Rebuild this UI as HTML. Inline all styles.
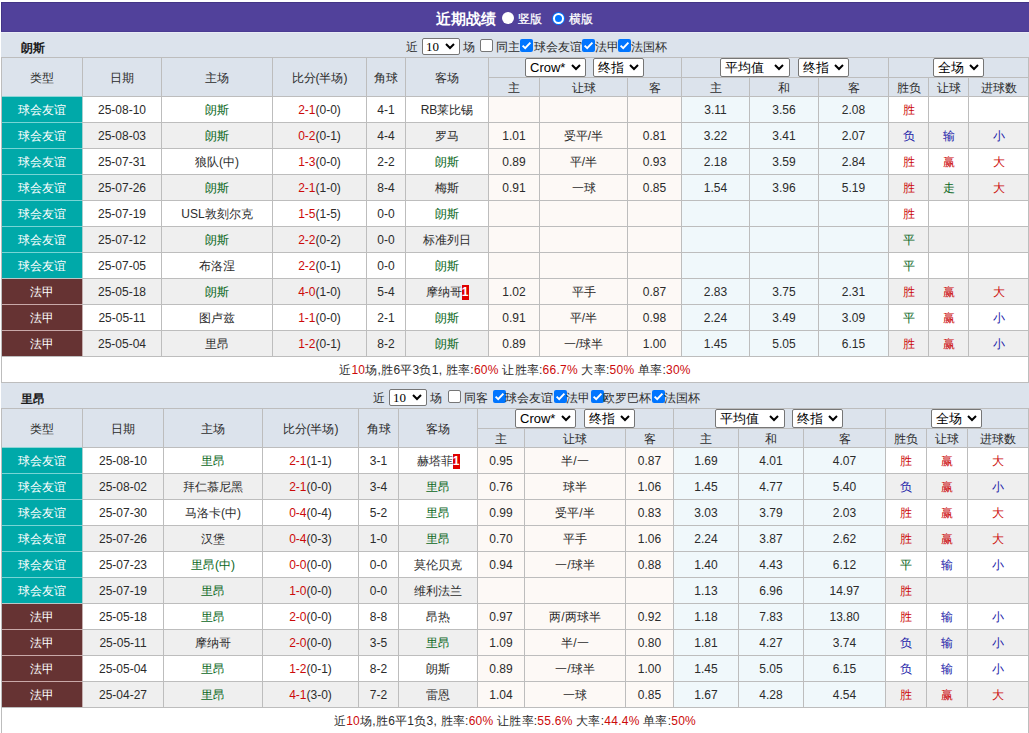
<!DOCTYPE html><html><head><meta charset="utf-8"><style>
*{margin:0;padding:0;box-sizing:content-box}
html,body{width:1029px;height:733px;overflow:hidden;background:#fff}
body{position:relative;font-family:"Liberation Sans",sans-serif;font-size:12px;color:#333}
.a{position:absolute}
.t{position:absolute;text-align:center;white-space:nowrap;overflow:visible}
.sel{background:#fff;border:1px solid #767676;border-radius:2px}
.cb{width:11px;height:11px;border:1px solid #767676;border-radius:2px;background:#fff}
.cbc{width:13px;height:13px;border-radius:2px;background:#0075FF}
.badge{display:inline-block;background:#e00000;color:#fff;font-weight:bold;line-height:15px;height:15px;width:7px;text-align:center;vertical-align:0px;font-size:12px}
</style></head><body><div class="a" style="left:1px;top:2px;width:1028px;height:30px;background:#51419B;"></div><div class="a" style="left:1px;top:2px;width:1028px;height:1px;background:#433586;"></div><div class="a" style="left:1px;top:2px;width:1px;height:30px;background:#433586;"></div><div class="a" style="left:1px;top:31px;width:1028px;height:1px;background:#4a3c92;"></div><div class="a" style="left:436px;top:8.5px;line-height:19px;color:#fff;font-size:15px;white-space:nowrap;font-weight:bold;">近期战绩</div><div class="a" style="left:502px;top:12px;width:12px;height:12px;border-radius:50%;background:#fff;"></div><div class="a" style="left:518px;top:11px;line-height:16px;color:#fff;font-size:12px;white-space:nowrap;-webkit-text-stroke:0.25px #fff;">竖版</div><div class="a" style="left:553px;top:13px;width:7px;height:7px;border-radius:50%;background:#0075FF;border:2px solid #fff;box-shadow:0 0 0 1px #0075FF"></div><div class="a" style="left:569px;top:11px;line-height:16px;color:#fff;font-size:12px;white-space:nowrap;-webkit-text-stroke:0.25px #fff;">横版</div><div class="a" style="left:1px;top:32px;width:1028px;height:25px;background:#DCE3EC;"></div><div class="a" style="left:1px;top:32px;width:1028px;height:1px;background:#e9ebf5;"></div><div class="a" style="left:21px;top:40px;line-height:16px;color:#1a1a1a;font-size:12px;white-space:nowrap;font-weight:bold;">朗斯</div><div class="a" style="left:406px;top:39px;line-height:16px;color:#2b2b2b;font-size:12px;white-space:nowrap;">近</div><div class="a sel" style="left:422px;top:38px;width:36px;height:15px;"></div><div class="a" style="left:426px;top:38px;height:17px;line-height:17px;font-size:13px;color:#000;font-family:'Liberation Serif',serif;white-space:nowrap">10</div><svg class="a" style="left:445px;top:43px" width="10" height="7" viewBox="0 0 10 7"><path d="M1 1 L5.0 5 L9 1" fill="none" stroke="#000" stroke-width="2"/></svg><div class="a" style="left:463px;top:39px;line-height:16px;color:#2b2b2b;font-size:12px;white-space:nowrap;">场</div><div class="a cb" style="left:480px;top:39px;"></div><div class="a" style="left:496px;top:39px;line-height:16px;color:#2b2b2b;font-size:12px;white-space:nowrap;">同主</div><div class="a cbc" style="left:520px;top:39px;"></div><svg class="a" style="left:520px;top:39px" width="13" height="13" viewBox="0 0 13 13"><path d="M2.6 6.6 L5.2 9.2 L10.4 3.6" fill="none" stroke="#fff" stroke-width="1.9"/></svg><div class="a" style="left:534px;top:39px;line-height:16px;color:#2b2b2b;font-size:12px;white-space:nowrap;">球会友谊</div><div class="a cbc" style="left:582px;top:39px;"></div><svg class="a" style="left:582px;top:39px" width="13" height="13" viewBox="0 0 13 13"><path d="M2.6 6.6 L5.2 9.2 L10.4 3.6" fill="none" stroke="#fff" stroke-width="1.9"/></svg><div class="a" style="left:595px;top:39px;line-height:16px;color:#2b2b2b;font-size:12px;white-space:nowrap;">法甲</div><div class="a cbc" style="left:618px;top:39px;"></div><svg class="a" style="left:618px;top:39px" width="13" height="13" viewBox="0 0 13 13"><path d="M2.6 6.6 L5.2 9.2 L10.4 3.6" fill="none" stroke="#fff" stroke-width="1.9"/></svg><div class="a" style="left:631px;top:39px;line-height:16px;color:#2b2b2b;font-size:12px;white-space:nowrap;">法国杯</div><div class="a" style="left:1px;top:57px;width:1028px;height:300px;background:#BDBDBD;"></div><div class="a" style="left:2px;top:58px;width:80px;height:38px;background:#DCE3EC;"></div><div class="t" style="left:2px;top:59px;width:80px;height:38px;line-height:38px;color:#2b2b2b;font-size:12px;">类型</div><div class="a" style="left:83px;top:58px;width:78px;height:38px;background:#DCE3EC;"></div><div class="t" style="left:83px;top:59px;width:78px;height:38px;line-height:38px;color:#2b2b2b;font-size:12px;">日期</div><div class="a" style="left:162px;top:58px;width:110px;height:38px;background:#DCE3EC;"></div><div class="t" style="left:162px;top:59px;width:110px;height:38px;line-height:38px;color:#2b2b2b;font-size:12px;">主场</div><div class="a" style="left:273px;top:58px;width:93px;height:38px;background:#DCE3EC;"></div><div class="t" style="left:273px;top:59px;width:93px;height:38px;line-height:38px;color:#2b2b2b;font-size:12px;">比分(半场)</div><div class="a" style="left:367px;top:58px;width:38px;height:38px;background:#DCE3EC;"></div><div class="t" style="left:367px;top:59px;width:38px;height:38px;line-height:38px;color:#2b2b2b;font-size:12px;">角球</div><div class="a" style="left:406px;top:58px;width:82px;height:38px;background:#DCE3EC;"></div><div class="t" style="left:406px;top:59px;width:82px;height:38px;line-height:38px;color:#2b2b2b;font-size:12px;">客场</div><div class="a" style="left:489px;top:58px;width:192px;height:19px;background:#DCE3EC;"></div><div class="a" style="left:489px;top:78px;width:50px;height:18px;background:#DCE3EC;"></div><div class="t" style="left:489px;top:79px;width:50px;height:18px;line-height:18px;color:#2b2b2b;font-size:12px;">主</div><div class="a" style="left:540px;top:78px;width:87px;height:18px;background:#DCE3EC;"></div><div class="t" style="left:540px;top:79px;width:87px;height:18px;line-height:18px;color:#2b2b2b;font-size:12px;">让球</div><div class="a" style="left:628px;top:78px;width:53px;height:18px;background:#DCE3EC;"></div><div class="t" style="left:628px;top:79px;width:53px;height:18px;line-height:18px;color:#2b2b2b;font-size:12px;">客</div><div class="a" style="left:682px;top:58px;width:206px;height:19px;background:#DCE3EC;"></div><div class="a" style="left:682px;top:78px;width:67px;height:18px;background:#DCE3EC;"></div><div class="t" style="left:682px;top:79px;width:67px;height:18px;line-height:18px;color:#2b2b2b;font-size:12px;">主</div><div class="a" style="left:750px;top:78px;width:68px;height:18px;background:#DCE3EC;"></div><div class="t" style="left:750px;top:79px;width:68px;height:18px;line-height:18px;color:#2b2b2b;font-size:12px;">和</div><div class="a" style="left:819px;top:78px;width:69px;height:18px;background:#DCE3EC;"></div><div class="t" style="left:819px;top:79px;width:69px;height:18px;line-height:18px;color:#2b2b2b;font-size:12px;">客</div><div class="a" style="left:889px;top:58px;width:139px;height:19px;background:#DCE3EC;"></div><div class="a" style="left:889px;top:78px;width:39px;height:18px;background:#DCE3EC;"></div><div class="t" style="left:889px;top:79px;width:39px;height:18px;line-height:18px;color:#2b2b2b;font-size:12px;">胜负</div><div class="a" style="left:929px;top:78px;width:39px;height:18px;background:#DCE3EC;"></div><div class="t" style="left:929px;top:79px;width:39px;height:18px;line-height:18px;color:#2b2b2b;font-size:12px;">让球</div><div class="a" style="left:969px;top:78px;width:59px;height:18px;background:#DCE3EC;"></div><div class="t" style="left:969px;top:79px;width:59px;height:18px;line-height:18px;color:#2b2b2b;font-size:12px;">进球数</div><div class="a sel" style="left:525px;top:58px;width:59px;height:17px;"></div><div class="a" style="left:530px;top:58px;height:19px;line-height:19px;font-size:13px;color:#000;white-space:nowrap">Crow*</div><svg class="a" style="left:571px;top:64px" width="10" height="7" viewBox="0 0 10 7"><path d="M1 1 L5.0 5 L9 1" fill="none" stroke="#000" stroke-width="2"/></svg><div class="a sel" style="left:593px;top:58px;width:49px;height:17px;"></div><div class="a" style="left:598px;top:58px;height:19px;line-height:19px;font-size:13px;color:#000;white-space:nowrap">终指</div><svg class="a" style="left:629px;top:64px" width="10" height="7" viewBox="0 0 10 7"><path d="M1 1 L5.0 5 L9 1" fill="none" stroke="#000" stroke-width="2"/></svg><div class="a sel" style="left:720px;top:58px;width:68px;height:17px;"></div><div class="a" style="left:725px;top:58px;height:19px;line-height:19px;font-size:13px;color:#000;white-space:nowrap">平均值</div><svg class="a" style="left:774px;top:64px" width="10" height="7" viewBox="0 0 10 7"><path d="M1 1 L5.0 5 L9 1" fill="none" stroke="#000" stroke-width="2"/></svg><div class="a sel" style="left:798px;top:58px;width:49px;height:17px;"></div><div class="a" style="left:803px;top:58px;height:19px;line-height:19px;font-size:13px;color:#000;white-space:nowrap">终指</div><svg class="a" style="left:834px;top:64px" width="10" height="7" viewBox="0 0 10 7"><path d="M1 1 L5.0 5 L9 1" fill="none" stroke="#000" stroke-width="2"/></svg><div class="a sel" style="left:933px;top:58px;width:49px;height:17px;"></div><div class="a" style="left:938px;top:58px;height:19px;line-height:19px;font-size:13px;color:#000;white-space:nowrap">全场</div><svg class="a" style="left:969px;top:64px" width="10" height="7" viewBox="0 0 10 7"><path d="M1 1 L5.0 5 L9 1" fill="none" stroke="#000" stroke-width="2"/></svg><div class="a" style="left:2px;top:97px;width:80px;height:25px;background:#00A9A9;"></div><div class="t" style="left:2px;top:98px;width:80px;height:25px;line-height:25px;color:#fff;font-size:12px;">球会友谊</div><div class="a" style="left:83px;top:97px;width:78px;height:25px;background:#FFFFFF;"></div><div class="t" style="left:83px;top:98px;width:78px;height:25px;line-height:25px;color:#2b2b2b;font-size:12px;">25-08-10</div><div class="a" style="left:162px;top:97px;width:110px;height:25px;background:#FFFFFF;"></div><div class="t" style="left:162px;top:98px;width:110px;height:25px;line-height:25px;color:#2b2b2b;font-size:12px;"><span style="color:#08661a">朗斯</span></div><div class="a" style="left:273px;top:97px;width:93px;height:25px;background:#FFFFFF;"></div><div class="t" style="left:273px;top:98px;width:93px;height:25px;line-height:25px;color:#2b2b2b;font-size:12px;"><span style="color:#CC0A0A">2-1</span>(0-0)</div><div class="a" style="left:367px;top:97px;width:38px;height:25px;background:#FFFFFF;"></div><div class="t" style="left:367px;top:98px;width:38px;height:25px;line-height:25px;color:#2b2b2b;font-size:12px;">4-1</div><div class="a" style="left:406px;top:97px;width:82px;height:25px;background:#FFFFFF;"></div><div class="t" style="left:406px;top:98px;width:82px;height:25px;line-height:25px;color:#2b2b2b;font-size:12px;">RB莱比锡</div><div class="a" style="left:489px;top:97px;width:50px;height:25px;background:#FDF9F6;"></div><div class="a" style="left:540px;top:97px;width:87px;height:25px;background:#FDF9F6;"></div><div class="a" style="left:628px;top:97px;width:53px;height:25px;background:#FDF9F6;"></div><div class="a" style="left:682px;top:97px;width:67px;height:25px;background:#F0F8FB;"></div><div class="t" style="left:682px;top:98px;width:67px;height:25px;line-height:25px;color:#2b2b2b;font-size:12px;">3.11</div><div class="a" style="left:750px;top:97px;width:68px;height:25px;background:#F0F8FB;"></div><div class="t" style="left:750px;top:98px;width:68px;height:25px;line-height:25px;color:#2b2b2b;font-size:12px;">3.56</div><div class="a" style="left:819px;top:97px;width:69px;height:25px;background:#F0F8FB;"></div><div class="t" style="left:819px;top:98px;width:69px;height:25px;line-height:25px;color:#2b2b2b;font-size:12px;">2.08</div><div class="a" style="left:889px;top:97px;width:39px;height:25px;background:#FFFFFF;"></div><div class="t" style="left:889px;top:98px;width:39px;height:25px;line-height:25px;color:#2b2b2b;font-size:12px;"><span style="color:#CC0A0A">胜</span></div><div class="a" style="left:929px;top:97px;width:39px;height:25px;background:#FFFFFF;"></div><div class="a" style="left:969px;top:97px;width:59px;height:25px;background:#FFFFFF;"></div><div class="a" style="left:82px;top:97px;width:1px;height:25px;background:#A9CFCF;"></div><div class="a" style="left:2px;top:123px;width:80px;height:25px;background:#00A9A9;"></div><div class="t" style="left:2px;top:124px;width:80px;height:25px;line-height:25px;color:#fff;font-size:12px;">球会友谊</div><div class="a" style="left:83px;top:123px;width:78px;height:25px;background:#EFEFEF;"></div><div class="t" style="left:83px;top:124px;width:78px;height:25px;line-height:25px;color:#2b2b2b;font-size:12px;">25-08-03</div><div class="a" style="left:162px;top:123px;width:110px;height:25px;background:#EFEFEF;"></div><div class="t" style="left:162px;top:124px;width:110px;height:25px;line-height:25px;color:#2b2b2b;font-size:12px;"><span style="color:#08661a">朗斯</span></div><div class="a" style="left:273px;top:123px;width:93px;height:25px;background:#EFEFEF;"></div><div class="t" style="left:273px;top:124px;width:93px;height:25px;line-height:25px;color:#2b2b2b;font-size:12px;"><span style="color:#CC0A0A">0-2</span>(0-1)</div><div class="a" style="left:367px;top:123px;width:38px;height:25px;background:#EFEFEF;"></div><div class="t" style="left:367px;top:124px;width:38px;height:25px;line-height:25px;color:#2b2b2b;font-size:12px;">4-4</div><div class="a" style="left:406px;top:123px;width:82px;height:25px;background:#EFEFEF;"></div><div class="t" style="left:406px;top:124px;width:82px;height:25px;line-height:25px;color:#2b2b2b;font-size:12px;">罗马</div><div class="a" style="left:489px;top:123px;width:50px;height:25px;background:#FDF9F6;"></div><div class="t" style="left:489px;top:124px;width:50px;height:25px;line-height:25px;color:#2b2b2b;font-size:12px;">1.01</div><div class="a" style="left:540px;top:123px;width:87px;height:25px;background:#FDF9F6;"></div><div class="t" style="left:540px;top:124px;width:87px;height:25px;line-height:25px;color:#2b2b2b;font-size:12px;">受平/半</div><div class="a" style="left:628px;top:123px;width:53px;height:25px;background:#FDF9F6;"></div><div class="t" style="left:628px;top:124px;width:53px;height:25px;line-height:25px;color:#2b2b2b;font-size:12px;">0.81</div><div class="a" style="left:682px;top:123px;width:67px;height:25px;background:#F0F8FB;"></div><div class="t" style="left:682px;top:124px;width:67px;height:25px;line-height:25px;color:#2b2b2b;font-size:12px;">3.22</div><div class="a" style="left:750px;top:123px;width:68px;height:25px;background:#F0F8FB;"></div><div class="t" style="left:750px;top:124px;width:68px;height:25px;line-height:25px;color:#2b2b2b;font-size:12px;">3.41</div><div class="a" style="left:819px;top:123px;width:69px;height:25px;background:#F0F8FB;"></div><div class="t" style="left:819px;top:124px;width:69px;height:25px;line-height:25px;color:#2b2b2b;font-size:12px;">2.07</div><div class="a" style="left:889px;top:123px;width:39px;height:25px;background:#EFEFEF;"></div><div class="t" style="left:889px;top:124px;width:39px;height:25px;line-height:25px;color:#2b2b2b;font-size:12px;"><span style="color:#1a1aa8">负</span></div><div class="a" style="left:929px;top:123px;width:39px;height:25px;background:#EFEFEF;"></div><div class="t" style="left:929px;top:124px;width:39px;height:25px;line-height:25px;color:#2b2b2b;font-size:12px;"><span style="color:#1a1aa8">输</span></div><div class="a" style="left:969px;top:123px;width:59px;height:25px;background:#EFEFEF;"></div><div class="t" style="left:969px;top:124px;width:59px;height:25px;line-height:25px;color:#2b2b2b;font-size:12px;"><span style="color:#1a1aa8">小</span></div><div class="a" style="left:82px;top:123px;width:1px;height:25px;background:#A9CFCF;"></div><div class="a" style="left:2px;top:122px;width:80px;height:1px;background:#78D5D5;"></div><div class="a" style="left:2px;top:149px;width:80px;height:25px;background:#00A9A9;"></div><div class="t" style="left:2px;top:150px;width:80px;height:25px;line-height:25px;color:#fff;font-size:12px;">球会友谊</div><div class="a" style="left:83px;top:149px;width:78px;height:25px;background:#FFFFFF;"></div><div class="t" style="left:83px;top:150px;width:78px;height:25px;line-height:25px;color:#2b2b2b;font-size:12px;">25-07-31</div><div class="a" style="left:162px;top:149px;width:110px;height:25px;background:#FFFFFF;"></div><div class="t" style="left:162px;top:150px;width:110px;height:25px;line-height:25px;color:#2b2b2b;font-size:12px;">狼队(中)</div><div class="a" style="left:273px;top:149px;width:93px;height:25px;background:#FFFFFF;"></div><div class="t" style="left:273px;top:150px;width:93px;height:25px;line-height:25px;color:#2b2b2b;font-size:12px;"><span style="color:#CC0A0A">1-3</span>(0-0)</div><div class="a" style="left:367px;top:149px;width:38px;height:25px;background:#FFFFFF;"></div><div class="t" style="left:367px;top:150px;width:38px;height:25px;line-height:25px;color:#2b2b2b;font-size:12px;">2-2</div><div class="a" style="left:406px;top:149px;width:82px;height:25px;background:#FFFFFF;"></div><div class="t" style="left:406px;top:150px;width:82px;height:25px;line-height:25px;color:#2b2b2b;font-size:12px;"><span style="color:#08661a">朗斯</span></div><div class="a" style="left:489px;top:149px;width:50px;height:25px;background:#FDF9F6;"></div><div class="t" style="left:489px;top:150px;width:50px;height:25px;line-height:25px;color:#2b2b2b;font-size:12px;">0.89</div><div class="a" style="left:540px;top:149px;width:87px;height:25px;background:#FDF9F6;"></div><div class="t" style="left:540px;top:150px;width:87px;height:25px;line-height:25px;color:#2b2b2b;font-size:12px;">平/半</div><div class="a" style="left:628px;top:149px;width:53px;height:25px;background:#FDF9F6;"></div><div class="t" style="left:628px;top:150px;width:53px;height:25px;line-height:25px;color:#2b2b2b;font-size:12px;">0.93</div><div class="a" style="left:682px;top:149px;width:67px;height:25px;background:#F0F8FB;"></div><div class="t" style="left:682px;top:150px;width:67px;height:25px;line-height:25px;color:#2b2b2b;font-size:12px;">2.18</div><div class="a" style="left:750px;top:149px;width:68px;height:25px;background:#F0F8FB;"></div><div class="t" style="left:750px;top:150px;width:68px;height:25px;line-height:25px;color:#2b2b2b;font-size:12px;">3.59</div><div class="a" style="left:819px;top:149px;width:69px;height:25px;background:#F0F8FB;"></div><div class="t" style="left:819px;top:150px;width:69px;height:25px;line-height:25px;color:#2b2b2b;font-size:12px;">2.84</div><div class="a" style="left:889px;top:149px;width:39px;height:25px;background:#FFFFFF;"></div><div class="t" style="left:889px;top:150px;width:39px;height:25px;line-height:25px;color:#2b2b2b;font-size:12px;"><span style="color:#CC0A0A">胜</span></div><div class="a" style="left:929px;top:149px;width:39px;height:25px;background:#FFFFFF;"></div><div class="t" style="left:929px;top:150px;width:39px;height:25px;line-height:25px;color:#2b2b2b;font-size:12px;"><span style="color:#CC0A0A">赢</span></div><div class="a" style="left:969px;top:149px;width:59px;height:25px;background:#FFFFFF;"></div><div class="t" style="left:969px;top:150px;width:59px;height:25px;line-height:25px;color:#2b2b2b;font-size:12px;"><span style="color:#CC0A0A">大</span></div><div class="a" style="left:82px;top:149px;width:1px;height:25px;background:#A9CFCF;"></div><div class="a" style="left:2px;top:148px;width:80px;height:1px;background:#78D5D5;"></div><div class="a" style="left:2px;top:175px;width:80px;height:25px;background:#00A9A9;"></div><div class="t" style="left:2px;top:176px;width:80px;height:25px;line-height:25px;color:#fff;font-size:12px;">球会友谊</div><div class="a" style="left:83px;top:175px;width:78px;height:25px;background:#EFEFEF;"></div><div class="t" style="left:83px;top:176px;width:78px;height:25px;line-height:25px;color:#2b2b2b;font-size:12px;">25-07-26</div><div class="a" style="left:162px;top:175px;width:110px;height:25px;background:#EFEFEF;"></div><div class="t" style="left:162px;top:176px;width:110px;height:25px;line-height:25px;color:#2b2b2b;font-size:12px;"><span style="color:#08661a">朗斯</span></div><div class="a" style="left:273px;top:175px;width:93px;height:25px;background:#EFEFEF;"></div><div class="t" style="left:273px;top:176px;width:93px;height:25px;line-height:25px;color:#2b2b2b;font-size:12px;"><span style="color:#CC0A0A">2-1</span>(1-0)</div><div class="a" style="left:367px;top:175px;width:38px;height:25px;background:#EFEFEF;"></div><div class="t" style="left:367px;top:176px;width:38px;height:25px;line-height:25px;color:#2b2b2b;font-size:12px;">8-4</div><div class="a" style="left:406px;top:175px;width:82px;height:25px;background:#EFEFEF;"></div><div class="t" style="left:406px;top:176px;width:82px;height:25px;line-height:25px;color:#2b2b2b;font-size:12px;">梅斯</div><div class="a" style="left:489px;top:175px;width:50px;height:25px;background:#FDF9F6;"></div><div class="t" style="left:489px;top:176px;width:50px;height:25px;line-height:25px;color:#2b2b2b;font-size:12px;">0.91</div><div class="a" style="left:540px;top:175px;width:87px;height:25px;background:#FDF9F6;"></div><div class="t" style="left:540px;top:176px;width:87px;height:25px;line-height:25px;color:#2b2b2b;font-size:12px;">一球</div><div class="a" style="left:628px;top:175px;width:53px;height:25px;background:#FDF9F6;"></div><div class="t" style="left:628px;top:176px;width:53px;height:25px;line-height:25px;color:#2b2b2b;font-size:12px;">0.85</div><div class="a" style="left:682px;top:175px;width:67px;height:25px;background:#F0F8FB;"></div><div class="t" style="left:682px;top:176px;width:67px;height:25px;line-height:25px;color:#2b2b2b;font-size:12px;">1.54</div><div class="a" style="left:750px;top:175px;width:68px;height:25px;background:#F0F8FB;"></div><div class="t" style="left:750px;top:176px;width:68px;height:25px;line-height:25px;color:#2b2b2b;font-size:12px;">3.96</div><div class="a" style="left:819px;top:175px;width:69px;height:25px;background:#F0F8FB;"></div><div class="t" style="left:819px;top:176px;width:69px;height:25px;line-height:25px;color:#2b2b2b;font-size:12px;">5.19</div><div class="a" style="left:889px;top:175px;width:39px;height:25px;background:#EFEFEF;"></div><div class="t" style="left:889px;top:176px;width:39px;height:25px;line-height:25px;color:#2b2b2b;font-size:12px;"><span style="color:#CC0A0A">胜</span></div><div class="a" style="left:929px;top:175px;width:39px;height:25px;background:#EFEFEF;"></div><div class="t" style="left:929px;top:176px;width:39px;height:25px;line-height:25px;color:#2b2b2b;font-size:12px;"><span style="color:#08661a">走</span></div><div class="a" style="left:969px;top:175px;width:59px;height:25px;background:#EFEFEF;"></div><div class="t" style="left:969px;top:176px;width:59px;height:25px;line-height:25px;color:#2b2b2b;font-size:12px;"><span style="color:#CC0A0A">大</span></div><div class="a" style="left:82px;top:175px;width:1px;height:25px;background:#A9CFCF;"></div><div class="a" style="left:2px;top:174px;width:80px;height:1px;background:#78D5D5;"></div><div class="a" style="left:2px;top:201px;width:80px;height:25px;background:#00A9A9;"></div><div class="t" style="left:2px;top:202px;width:80px;height:25px;line-height:25px;color:#fff;font-size:12px;">球会友谊</div><div class="a" style="left:83px;top:201px;width:78px;height:25px;background:#FFFFFF;"></div><div class="t" style="left:83px;top:202px;width:78px;height:25px;line-height:25px;color:#2b2b2b;font-size:12px;">25-07-19</div><div class="a" style="left:162px;top:201px;width:110px;height:25px;background:#FFFFFF;"></div><div class="t" style="left:162px;top:202px;width:110px;height:25px;line-height:25px;color:#2b2b2b;font-size:12px;">USL敦刻尔克</div><div class="a" style="left:273px;top:201px;width:93px;height:25px;background:#FFFFFF;"></div><div class="t" style="left:273px;top:202px;width:93px;height:25px;line-height:25px;color:#2b2b2b;font-size:12px;"><span style="color:#CC0A0A">1-5</span>(1-5)</div><div class="a" style="left:367px;top:201px;width:38px;height:25px;background:#FFFFFF;"></div><div class="t" style="left:367px;top:202px;width:38px;height:25px;line-height:25px;color:#2b2b2b;font-size:12px;">0-0</div><div class="a" style="left:406px;top:201px;width:82px;height:25px;background:#FFFFFF;"></div><div class="t" style="left:406px;top:202px;width:82px;height:25px;line-height:25px;color:#2b2b2b;font-size:12px;"><span style="color:#08661a">朗斯</span></div><div class="a" style="left:489px;top:201px;width:50px;height:25px;background:#FDF9F6;"></div><div class="a" style="left:540px;top:201px;width:87px;height:25px;background:#FDF9F6;"></div><div class="a" style="left:628px;top:201px;width:53px;height:25px;background:#FDF9F6;"></div><div class="a" style="left:682px;top:201px;width:67px;height:25px;background:#F0F8FB;"></div><div class="a" style="left:750px;top:201px;width:68px;height:25px;background:#F0F8FB;"></div><div class="a" style="left:819px;top:201px;width:69px;height:25px;background:#F0F8FB;"></div><div class="a" style="left:889px;top:201px;width:39px;height:25px;background:#FFFFFF;"></div><div class="t" style="left:889px;top:202px;width:39px;height:25px;line-height:25px;color:#2b2b2b;font-size:12px;"><span style="color:#CC0A0A">胜</span></div><div class="a" style="left:929px;top:201px;width:39px;height:25px;background:#FFFFFF;"></div><div class="a" style="left:969px;top:201px;width:59px;height:25px;background:#FFFFFF;"></div><div class="a" style="left:82px;top:201px;width:1px;height:25px;background:#A9CFCF;"></div><div class="a" style="left:2px;top:200px;width:80px;height:1px;background:#78D5D5;"></div><div class="a" style="left:2px;top:227px;width:80px;height:25px;background:#00A9A9;"></div><div class="t" style="left:2px;top:228px;width:80px;height:25px;line-height:25px;color:#fff;font-size:12px;">球会友谊</div><div class="a" style="left:83px;top:227px;width:78px;height:25px;background:#EFEFEF;"></div><div class="t" style="left:83px;top:228px;width:78px;height:25px;line-height:25px;color:#2b2b2b;font-size:12px;">25-07-12</div><div class="a" style="left:162px;top:227px;width:110px;height:25px;background:#EFEFEF;"></div><div class="t" style="left:162px;top:228px;width:110px;height:25px;line-height:25px;color:#2b2b2b;font-size:12px;"><span style="color:#08661a">朗斯</span></div><div class="a" style="left:273px;top:227px;width:93px;height:25px;background:#EFEFEF;"></div><div class="t" style="left:273px;top:228px;width:93px;height:25px;line-height:25px;color:#2b2b2b;font-size:12px;"><span style="color:#CC0A0A">2-2</span>(0-2)</div><div class="a" style="left:367px;top:227px;width:38px;height:25px;background:#EFEFEF;"></div><div class="t" style="left:367px;top:228px;width:38px;height:25px;line-height:25px;color:#2b2b2b;font-size:12px;">0-0</div><div class="a" style="left:406px;top:227px;width:82px;height:25px;background:#EFEFEF;"></div><div class="t" style="left:406px;top:228px;width:82px;height:25px;line-height:25px;color:#2b2b2b;font-size:12px;">标准列日</div><div class="a" style="left:489px;top:227px;width:50px;height:25px;background:#FDF9F6;"></div><div class="a" style="left:540px;top:227px;width:87px;height:25px;background:#FDF9F6;"></div><div class="a" style="left:628px;top:227px;width:53px;height:25px;background:#FDF9F6;"></div><div class="a" style="left:682px;top:227px;width:67px;height:25px;background:#F0F8FB;"></div><div class="a" style="left:750px;top:227px;width:68px;height:25px;background:#F0F8FB;"></div><div class="a" style="left:819px;top:227px;width:69px;height:25px;background:#F0F8FB;"></div><div class="a" style="left:889px;top:227px;width:39px;height:25px;background:#EFEFEF;"></div><div class="t" style="left:889px;top:228px;width:39px;height:25px;line-height:25px;color:#2b2b2b;font-size:12px;"><span style="color:#08661a">平</span></div><div class="a" style="left:929px;top:227px;width:39px;height:25px;background:#EFEFEF;"></div><div class="a" style="left:969px;top:227px;width:59px;height:25px;background:#EFEFEF;"></div><div class="a" style="left:82px;top:227px;width:1px;height:25px;background:#A9CFCF;"></div><div class="a" style="left:2px;top:226px;width:80px;height:1px;background:#78D5D5;"></div><div class="a" style="left:2px;top:253px;width:80px;height:25px;background:#00A9A9;"></div><div class="t" style="left:2px;top:254px;width:80px;height:25px;line-height:25px;color:#fff;font-size:12px;">球会友谊</div><div class="a" style="left:83px;top:253px;width:78px;height:25px;background:#FFFFFF;"></div><div class="t" style="left:83px;top:254px;width:78px;height:25px;line-height:25px;color:#2b2b2b;font-size:12px;">25-07-05</div><div class="a" style="left:162px;top:253px;width:110px;height:25px;background:#FFFFFF;"></div><div class="t" style="left:162px;top:254px;width:110px;height:25px;line-height:25px;color:#2b2b2b;font-size:12px;">布洛涅</div><div class="a" style="left:273px;top:253px;width:93px;height:25px;background:#FFFFFF;"></div><div class="t" style="left:273px;top:254px;width:93px;height:25px;line-height:25px;color:#2b2b2b;font-size:12px;"><span style="color:#CC0A0A">2-2</span>(0-1)</div><div class="a" style="left:367px;top:253px;width:38px;height:25px;background:#FFFFFF;"></div><div class="t" style="left:367px;top:254px;width:38px;height:25px;line-height:25px;color:#2b2b2b;font-size:12px;">0-0</div><div class="a" style="left:406px;top:253px;width:82px;height:25px;background:#FFFFFF;"></div><div class="t" style="left:406px;top:254px;width:82px;height:25px;line-height:25px;color:#2b2b2b;font-size:12px;"><span style="color:#08661a">朗斯</span></div><div class="a" style="left:489px;top:253px;width:50px;height:25px;background:#FDF9F6;"></div><div class="a" style="left:540px;top:253px;width:87px;height:25px;background:#FDF9F6;"></div><div class="a" style="left:628px;top:253px;width:53px;height:25px;background:#FDF9F6;"></div><div class="a" style="left:682px;top:253px;width:67px;height:25px;background:#F0F8FB;"></div><div class="a" style="left:750px;top:253px;width:68px;height:25px;background:#F0F8FB;"></div><div class="a" style="left:819px;top:253px;width:69px;height:25px;background:#F0F8FB;"></div><div class="a" style="left:889px;top:253px;width:39px;height:25px;background:#FFFFFF;"></div><div class="t" style="left:889px;top:254px;width:39px;height:25px;line-height:25px;color:#2b2b2b;font-size:12px;"><span style="color:#08661a">平</span></div><div class="a" style="left:929px;top:253px;width:39px;height:25px;background:#FFFFFF;"></div><div class="a" style="left:969px;top:253px;width:59px;height:25px;background:#FFFFFF;"></div><div class="a" style="left:82px;top:253px;width:1px;height:25px;background:#A9CFCF;"></div><div class="a" style="left:2px;top:252px;width:80px;height:1px;background:#78D5D5;"></div><div class="a" style="left:2px;top:279px;width:80px;height:25px;background:#663333;"></div><div class="t" style="left:2px;top:280px;width:80px;height:25px;line-height:25px;color:#fff;font-size:12px;">法甲</div><div class="a" style="left:83px;top:279px;width:78px;height:25px;background:#EFEFEF;"></div><div class="t" style="left:83px;top:280px;width:78px;height:25px;line-height:25px;color:#2b2b2b;font-size:12px;">25-05-18</div><div class="a" style="left:162px;top:279px;width:110px;height:25px;background:#EFEFEF;"></div><div class="t" style="left:162px;top:280px;width:110px;height:25px;line-height:25px;color:#2b2b2b;font-size:12px;"><span style="color:#08661a">朗斯</span></div><div class="a" style="left:273px;top:279px;width:93px;height:25px;background:#EFEFEF;"></div><div class="t" style="left:273px;top:280px;width:93px;height:25px;line-height:25px;color:#2b2b2b;font-size:12px;"><span style="color:#CC0A0A">4-0</span>(1-0)</div><div class="a" style="left:367px;top:279px;width:38px;height:25px;background:#EFEFEF;"></div><div class="t" style="left:367px;top:280px;width:38px;height:25px;line-height:25px;color:#2b2b2b;font-size:12px;">5-4</div><div class="a" style="left:406px;top:279px;width:82px;height:25px;background:#EFEFEF;"></div><div class="t" style="left:406px;top:280px;width:82px;height:25px;line-height:25px;color:#2b2b2b;font-size:12px;">摩纳哥<span class="badge">1</span></div><div class="a" style="left:489px;top:279px;width:50px;height:25px;background:#FDF9F6;"></div><div class="t" style="left:489px;top:280px;width:50px;height:25px;line-height:25px;color:#2b2b2b;font-size:12px;">1.02</div><div class="a" style="left:540px;top:279px;width:87px;height:25px;background:#FDF9F6;"></div><div class="t" style="left:540px;top:280px;width:87px;height:25px;line-height:25px;color:#2b2b2b;font-size:12px;">平手</div><div class="a" style="left:628px;top:279px;width:53px;height:25px;background:#FDF9F6;"></div><div class="t" style="left:628px;top:280px;width:53px;height:25px;line-height:25px;color:#2b2b2b;font-size:12px;">0.87</div><div class="a" style="left:682px;top:279px;width:67px;height:25px;background:#F0F8FB;"></div><div class="t" style="left:682px;top:280px;width:67px;height:25px;line-height:25px;color:#2b2b2b;font-size:12px;">2.83</div><div class="a" style="left:750px;top:279px;width:68px;height:25px;background:#F0F8FB;"></div><div class="t" style="left:750px;top:280px;width:68px;height:25px;line-height:25px;color:#2b2b2b;font-size:12px;">3.75</div><div class="a" style="left:819px;top:279px;width:69px;height:25px;background:#F0F8FB;"></div><div class="t" style="left:819px;top:280px;width:69px;height:25px;line-height:25px;color:#2b2b2b;font-size:12px;">2.31</div><div class="a" style="left:889px;top:279px;width:39px;height:25px;background:#EFEFEF;"></div><div class="t" style="left:889px;top:280px;width:39px;height:25px;line-height:25px;color:#2b2b2b;font-size:12px;"><span style="color:#CC0A0A">胜</span></div><div class="a" style="left:929px;top:279px;width:39px;height:25px;background:#EFEFEF;"></div><div class="t" style="left:929px;top:280px;width:39px;height:25px;line-height:25px;color:#2b2b2b;font-size:12px;"><span style="color:#CC0A0A">赢</span></div><div class="a" style="left:969px;top:279px;width:59px;height:25px;background:#EFEFEF;"></div><div class="t" style="left:969px;top:280px;width:59px;height:25px;line-height:25px;color:#2b2b2b;font-size:12px;"><span style="color:#CC0A0A">大</span></div><div class="a" style="left:82px;top:279px;width:1px;height:25px;background:#C4AEAE;"></div><div class="a" style="left:2px;top:278px;width:80px;height:1px;background:#B9C6C6;"></div><div class="a" style="left:2px;top:305px;width:80px;height:25px;background:#663333;"></div><div class="t" style="left:2px;top:306px;width:80px;height:25px;line-height:25px;color:#fff;font-size:12px;">法甲</div><div class="a" style="left:83px;top:305px;width:78px;height:25px;background:#FFFFFF;"></div><div class="t" style="left:83px;top:306px;width:78px;height:25px;line-height:25px;color:#2b2b2b;font-size:12px;">25-05-11</div><div class="a" style="left:162px;top:305px;width:110px;height:25px;background:#FFFFFF;"></div><div class="t" style="left:162px;top:306px;width:110px;height:25px;line-height:25px;color:#2b2b2b;font-size:12px;">图卢兹</div><div class="a" style="left:273px;top:305px;width:93px;height:25px;background:#FFFFFF;"></div><div class="t" style="left:273px;top:306px;width:93px;height:25px;line-height:25px;color:#2b2b2b;font-size:12px;"><span style="color:#CC0A0A">1-1</span>(0-0)</div><div class="a" style="left:367px;top:305px;width:38px;height:25px;background:#FFFFFF;"></div><div class="t" style="left:367px;top:306px;width:38px;height:25px;line-height:25px;color:#2b2b2b;font-size:12px;">2-1</div><div class="a" style="left:406px;top:305px;width:82px;height:25px;background:#FFFFFF;"></div><div class="t" style="left:406px;top:306px;width:82px;height:25px;line-height:25px;color:#2b2b2b;font-size:12px;"><span style="color:#08661a">朗斯</span></div><div class="a" style="left:489px;top:305px;width:50px;height:25px;background:#FDF9F6;"></div><div class="t" style="left:489px;top:306px;width:50px;height:25px;line-height:25px;color:#2b2b2b;font-size:12px;">0.91</div><div class="a" style="left:540px;top:305px;width:87px;height:25px;background:#FDF9F6;"></div><div class="t" style="left:540px;top:306px;width:87px;height:25px;line-height:25px;color:#2b2b2b;font-size:12px;">平/半</div><div class="a" style="left:628px;top:305px;width:53px;height:25px;background:#FDF9F6;"></div><div class="t" style="left:628px;top:306px;width:53px;height:25px;line-height:25px;color:#2b2b2b;font-size:12px;">0.98</div><div class="a" style="left:682px;top:305px;width:67px;height:25px;background:#F0F8FB;"></div><div class="t" style="left:682px;top:306px;width:67px;height:25px;line-height:25px;color:#2b2b2b;font-size:12px;">2.24</div><div class="a" style="left:750px;top:305px;width:68px;height:25px;background:#F0F8FB;"></div><div class="t" style="left:750px;top:306px;width:68px;height:25px;line-height:25px;color:#2b2b2b;font-size:12px;">3.49</div><div class="a" style="left:819px;top:305px;width:69px;height:25px;background:#F0F8FB;"></div><div class="t" style="left:819px;top:306px;width:69px;height:25px;line-height:25px;color:#2b2b2b;font-size:12px;">3.09</div><div class="a" style="left:889px;top:305px;width:39px;height:25px;background:#FFFFFF;"></div><div class="t" style="left:889px;top:306px;width:39px;height:25px;line-height:25px;color:#2b2b2b;font-size:12px;"><span style="color:#08661a">平</span></div><div class="a" style="left:929px;top:305px;width:39px;height:25px;background:#FFFFFF;"></div><div class="t" style="left:929px;top:306px;width:39px;height:25px;line-height:25px;color:#2b2b2b;font-size:12px;"><span style="color:#CC0A0A">赢</span></div><div class="a" style="left:969px;top:305px;width:59px;height:25px;background:#FFFFFF;"></div><div class="t" style="left:969px;top:306px;width:59px;height:25px;line-height:25px;color:#2b2b2b;font-size:12px;"><span style="color:#1a1aa8">小</span></div><div class="a" style="left:82px;top:305px;width:1px;height:25px;background:#C4AEAE;"></div><div class="a" style="left:2px;top:304px;width:80px;height:1px;background:#C9A9A9;"></div><div class="a" style="left:2px;top:331px;width:80px;height:25px;background:#663333;"></div><div class="t" style="left:2px;top:332px;width:80px;height:25px;line-height:25px;color:#fff;font-size:12px;">法甲</div><div class="a" style="left:83px;top:331px;width:78px;height:25px;background:#EFEFEF;"></div><div class="t" style="left:83px;top:332px;width:78px;height:25px;line-height:25px;color:#2b2b2b;font-size:12px;">25-05-04</div><div class="a" style="left:162px;top:331px;width:110px;height:25px;background:#EFEFEF;"></div><div class="t" style="left:162px;top:332px;width:110px;height:25px;line-height:25px;color:#2b2b2b;font-size:12px;">里昂</div><div class="a" style="left:273px;top:331px;width:93px;height:25px;background:#EFEFEF;"></div><div class="t" style="left:273px;top:332px;width:93px;height:25px;line-height:25px;color:#2b2b2b;font-size:12px;"><span style="color:#CC0A0A">1-2</span>(0-1)</div><div class="a" style="left:367px;top:331px;width:38px;height:25px;background:#EFEFEF;"></div><div class="t" style="left:367px;top:332px;width:38px;height:25px;line-height:25px;color:#2b2b2b;font-size:12px;">8-2</div><div class="a" style="left:406px;top:331px;width:82px;height:25px;background:#EFEFEF;"></div><div class="t" style="left:406px;top:332px;width:82px;height:25px;line-height:25px;color:#2b2b2b;font-size:12px;"><span style="color:#08661a">朗斯</span></div><div class="a" style="left:489px;top:331px;width:50px;height:25px;background:#FDF9F6;"></div><div class="t" style="left:489px;top:332px;width:50px;height:25px;line-height:25px;color:#2b2b2b;font-size:12px;">0.89</div><div class="a" style="left:540px;top:331px;width:87px;height:25px;background:#FDF9F6;"></div><div class="t" style="left:540px;top:332px;width:87px;height:25px;line-height:25px;color:#2b2b2b;font-size:12px;">一/球半</div><div class="a" style="left:628px;top:331px;width:53px;height:25px;background:#FDF9F6;"></div><div class="t" style="left:628px;top:332px;width:53px;height:25px;line-height:25px;color:#2b2b2b;font-size:12px;">1.00</div><div class="a" style="left:682px;top:331px;width:67px;height:25px;background:#F0F8FB;"></div><div class="t" style="left:682px;top:332px;width:67px;height:25px;line-height:25px;color:#2b2b2b;font-size:12px;">1.45</div><div class="a" style="left:750px;top:331px;width:68px;height:25px;background:#F0F8FB;"></div><div class="t" style="left:750px;top:332px;width:68px;height:25px;line-height:25px;color:#2b2b2b;font-size:12px;">5.05</div><div class="a" style="left:819px;top:331px;width:69px;height:25px;background:#F0F8FB;"></div><div class="t" style="left:819px;top:332px;width:69px;height:25px;line-height:25px;color:#2b2b2b;font-size:12px;">6.15</div><div class="a" style="left:889px;top:331px;width:39px;height:25px;background:#EFEFEF;"></div><div class="t" style="left:889px;top:332px;width:39px;height:25px;line-height:25px;color:#2b2b2b;font-size:12px;"><span style="color:#CC0A0A">胜</span></div><div class="a" style="left:929px;top:331px;width:39px;height:25px;background:#EFEFEF;"></div><div class="t" style="left:929px;top:332px;width:39px;height:25px;line-height:25px;color:#2b2b2b;font-size:12px;"><span style="color:#CC0A0A">赢</span></div><div class="a" style="left:969px;top:331px;width:59px;height:25px;background:#EFEFEF;"></div><div class="t" style="left:969px;top:332px;width:59px;height:25px;line-height:25px;color:#2b2b2b;font-size:12px;"><span style="color:#1a1aa8">小</span></div><div class="a" style="left:82px;top:331px;width:1px;height:25px;background:#C4AEAE;"></div><div class="a" style="left:2px;top:330px;width:80px;height:1px;background:#C9A9A9;"></div><div class="a" style="left:2px;top:96px;width:80px;height:1px;background:#8fd6d6;"></div><div class="a" style="left:2px;top:357px;width:1026px;height:25px;background:#FFFFFF;"></div><div class="a" style="left:1px;top:357px;width:1px;height:25px;background:#BDBDBD;"></div><div class="a" style="left:1028px;top:357px;width:1px;height:25px;background:#BDBDBD;"></div><div class="a" style="left:1px;top:382px;width:1028px;height:1px;background:#BDBDBD;"></div><div class="t" style="left:1px;top:358px;width:1028px;height:25px;line-height:25px;color:#2b2b2b;font-size:12px;letter-spacing:0.25px;">近<span style="color:#CC0A0A">10</span>场,胜6平3负1, 胜率:<span style="color:#CC0A0A">60%</span> 让胜率:<span style="color:#CC0A0A">66.7%</span> 大率:<span style="color:#CC0A0A">50%</span> 单率:<span style="color:#CC0A0A">30%</span></div><div class="a" style="left:1px;top:383px;width:1028px;height:25px;background:#DCE3EC;"></div><div class="a" style="left:21px;top:391px;line-height:16px;color:#1a1a1a;font-size:12px;white-space:nowrap;font-weight:bold;">里昂</div><div class="a" style="left:373px;top:390px;line-height:16px;color:#2b2b2b;font-size:12px;white-space:nowrap;">近</div><div class="a sel" style="left:389px;top:389px;width:36px;height:15px;"></div><div class="a" style="left:393px;top:389px;height:17px;line-height:17px;font-size:13px;color:#000;font-family:'Liberation Serif',serif;white-space:nowrap">10</div><svg class="a" style="left:412px;top:394px" width="10" height="7" viewBox="0 0 10 7"><path d="M1 1 L5.0 5 L9 1" fill="none" stroke="#000" stroke-width="2"/></svg><div class="a" style="left:430px;top:390px;line-height:16px;color:#2b2b2b;font-size:12px;white-space:nowrap;">场</div><div class="a cb" style="left:448px;top:390px;"></div><div class="a" style="left:464px;top:390px;line-height:16px;color:#2b2b2b;font-size:12px;white-space:nowrap;">同客</div><div class="a cbc" style="left:493px;top:390px;"></div><svg class="a" style="left:493px;top:390px" width="13" height="13" viewBox="0 0 13 13"><path d="M2.6 6.6 L5.2 9.2 L10.4 3.6" fill="none" stroke="#fff" stroke-width="1.9"/></svg><div class="a" style="left:505px;top:390px;line-height:16px;color:#2b2b2b;font-size:12px;white-space:nowrap;">球会友谊</div><div class="a cbc" style="left:554px;top:390px;"></div><svg class="a" style="left:554px;top:390px" width="13" height="13" viewBox="0 0 13 13"><path d="M2.6 6.6 L5.2 9.2 L10.4 3.6" fill="none" stroke="#fff" stroke-width="1.9"/></svg><div class="a" style="left:566px;top:390px;line-height:16px;color:#2b2b2b;font-size:12px;white-space:nowrap;">法甲</div><div class="a cbc" style="left:591px;top:390px;"></div><svg class="a" style="left:591px;top:390px" width="13" height="13" viewBox="0 0 13 13"><path d="M2.6 6.6 L5.2 9.2 L10.4 3.6" fill="none" stroke="#fff" stroke-width="1.9"/></svg><div class="a" style="left:603px;top:390px;line-height:16px;color:#2b2b2b;font-size:12px;white-space:nowrap;">欧罗巴杯</div><div class="a cbc" style="left:652px;top:390px;"></div><svg class="a" style="left:652px;top:390px" width="13" height="13" viewBox="0 0 13 13"><path d="M2.6 6.6 L5.2 9.2 L10.4 3.6" fill="none" stroke="#fff" stroke-width="1.9"/></svg><div class="a" style="left:664px;top:390px;line-height:16px;color:#2b2b2b;font-size:12px;white-space:nowrap;">法国杯</div><div class="a" style="left:1px;top:408px;width:1028px;height:300px;background:#BDBDBD;"></div><div class="a" style="left:2px;top:409px;width:80px;height:38px;background:#DCE3EC;"></div><div class="t" style="left:2px;top:410px;width:80px;height:38px;line-height:38px;color:#2b2b2b;font-size:12px;">类型</div><div class="a" style="left:83px;top:409px;width:80px;height:38px;background:#DCE3EC;"></div><div class="t" style="left:83px;top:410px;width:80px;height:38px;line-height:38px;color:#2b2b2b;font-size:12px;">日期</div><div class="a" style="left:164px;top:409px;width:98px;height:38px;background:#DCE3EC;"></div><div class="t" style="left:164px;top:410px;width:98px;height:38px;line-height:38px;color:#2b2b2b;font-size:12px;">主场</div><div class="a" style="left:263px;top:409px;width:95px;height:38px;background:#DCE3EC;"></div><div class="t" style="left:263px;top:410px;width:95px;height:38px;line-height:38px;color:#2b2b2b;font-size:12px;">比分(半场)</div><div class="a" style="left:359px;top:409px;width:39px;height:38px;background:#DCE3EC;"></div><div class="t" style="left:359px;top:410px;width:39px;height:38px;line-height:38px;color:#2b2b2b;font-size:12px;">角球</div><div class="a" style="left:399px;top:409px;width:78px;height:38px;background:#DCE3EC;"></div><div class="t" style="left:399px;top:410px;width:78px;height:38px;line-height:38px;color:#2b2b2b;font-size:12px;">客场</div><div class="a" style="left:478px;top:409px;width:195px;height:19px;background:#DCE3EC;"></div><div class="a" style="left:478px;top:429px;width:46px;height:18px;background:#DCE3EC;"></div><div class="t" style="left:478px;top:430px;width:46px;height:18px;line-height:18px;color:#2b2b2b;font-size:12px;">主</div><div class="a" style="left:525px;top:429px;width:100px;height:18px;background:#DCE3EC;"></div><div class="t" style="left:525px;top:430px;width:100px;height:18px;line-height:18px;color:#2b2b2b;font-size:12px;">让球</div><div class="a" style="left:626px;top:429px;width:47px;height:18px;background:#DCE3EC;"></div><div class="t" style="left:626px;top:430px;width:47px;height:18px;line-height:18px;color:#2b2b2b;font-size:12px;">客</div><div class="a" style="left:674px;top:409px;width:211px;height:19px;background:#DCE3EC;"></div><div class="a" style="left:674px;top:429px;width:64px;height:18px;background:#DCE3EC;"></div><div class="t" style="left:674px;top:430px;width:64px;height:18px;line-height:18px;color:#2b2b2b;font-size:12px;">主</div><div class="a" style="left:739px;top:429px;width:64px;height:18px;background:#DCE3EC;"></div><div class="t" style="left:739px;top:430px;width:64px;height:18px;line-height:18px;color:#2b2b2b;font-size:12px;">和</div><div class="a" style="left:804px;top:429px;width:81px;height:18px;background:#DCE3EC;"></div><div class="t" style="left:804px;top:430px;width:81px;height:18px;line-height:18px;color:#2b2b2b;font-size:12px;">客</div><div class="a" style="left:886px;top:409px;width:142px;height:19px;background:#DCE3EC;"></div><div class="a" style="left:886px;top:429px;width:40px;height:18px;background:#DCE3EC;"></div><div class="t" style="left:886px;top:430px;width:40px;height:18px;line-height:18px;color:#2b2b2b;font-size:12px;">胜负</div><div class="a" style="left:927px;top:429px;width:40px;height:18px;background:#DCE3EC;"></div><div class="t" style="left:927px;top:430px;width:40px;height:18px;line-height:18px;color:#2b2b2b;font-size:12px;">让球</div><div class="a" style="left:968px;top:429px;width:60px;height:18px;background:#DCE3EC;"></div><div class="t" style="left:968px;top:430px;width:60px;height:18px;line-height:18px;color:#2b2b2b;font-size:12px;">进球数</div><div class="a sel" style="left:515px;top:409px;width:59px;height:17px;"></div><div class="a" style="left:520px;top:409px;height:19px;line-height:19px;font-size:13px;color:#000;white-space:nowrap">Crow*</div><svg class="a" style="left:561px;top:415px" width="10" height="7" viewBox="0 0 10 7"><path d="M1 1 L5.0 5 L9 1" fill="none" stroke="#000" stroke-width="2"/></svg><div class="a sel" style="left:584px;top:409px;width:49px;height:17px;"></div><div class="a" style="left:589px;top:409px;height:19px;line-height:19px;font-size:13px;color:#000;white-space:nowrap">终指</div><svg class="a" style="left:620px;top:415px" width="10" height="7" viewBox="0 0 10 7"><path d="M1 1 L5.0 5 L9 1" fill="none" stroke="#000" stroke-width="2"/></svg><div class="a sel" style="left:715px;top:409px;width:68px;height:17px;"></div><div class="a" style="left:720px;top:409px;height:19px;line-height:19px;font-size:13px;color:#000;white-space:nowrap">平均值</div><svg class="a" style="left:769px;top:415px" width="10" height="7" viewBox="0 0 10 7"><path d="M1 1 L5.0 5 L9 1" fill="none" stroke="#000" stroke-width="2"/></svg><div class="a sel" style="left:792px;top:409px;width:49px;height:17px;"></div><div class="a" style="left:797px;top:409px;height:19px;line-height:19px;font-size:13px;color:#000;white-space:nowrap">终指</div><svg class="a" style="left:828px;top:415px" width="10" height="7" viewBox="0 0 10 7"><path d="M1 1 L5.0 5 L9 1" fill="none" stroke="#000" stroke-width="2"/></svg><div class="a sel" style="left:931px;top:409px;width:49px;height:17px;"></div><div class="a" style="left:936px;top:409px;height:19px;line-height:19px;font-size:13px;color:#000;white-space:nowrap">全场</div><svg class="a" style="left:967px;top:415px" width="10" height="7" viewBox="0 0 10 7"><path d="M1 1 L5.0 5 L9 1" fill="none" stroke="#000" stroke-width="2"/></svg><div class="a" style="left:2px;top:448px;width:80px;height:25px;background:#00A9A9;"></div><div class="t" style="left:2px;top:449px;width:80px;height:25px;line-height:25px;color:#fff;font-size:12px;">球会友谊</div><div class="a" style="left:83px;top:448px;width:80px;height:25px;background:#FFFFFF;"></div><div class="t" style="left:83px;top:449px;width:80px;height:25px;line-height:25px;color:#2b2b2b;font-size:12px;">25-08-10</div><div class="a" style="left:164px;top:448px;width:98px;height:25px;background:#FFFFFF;"></div><div class="t" style="left:164px;top:449px;width:98px;height:25px;line-height:25px;color:#2b2b2b;font-size:12px;"><span style="color:#08661a">里昂</span></div><div class="a" style="left:263px;top:448px;width:95px;height:25px;background:#FFFFFF;"></div><div class="t" style="left:263px;top:449px;width:95px;height:25px;line-height:25px;color:#2b2b2b;font-size:12px;"><span style="color:#CC0A0A">2-1</span>(1-1)</div><div class="a" style="left:359px;top:448px;width:39px;height:25px;background:#FFFFFF;"></div><div class="t" style="left:359px;top:449px;width:39px;height:25px;line-height:25px;color:#2b2b2b;font-size:12px;">3-1</div><div class="a" style="left:399px;top:448px;width:78px;height:25px;background:#FFFFFF;"></div><div class="t" style="left:399px;top:449px;width:78px;height:25px;line-height:25px;color:#2b2b2b;font-size:12px;">赫塔菲<span class="badge">1</span></div><div class="a" style="left:478px;top:448px;width:46px;height:25px;background:#FDF9F6;"></div><div class="t" style="left:478px;top:449px;width:46px;height:25px;line-height:25px;color:#2b2b2b;font-size:12px;">0.95</div><div class="a" style="left:525px;top:448px;width:100px;height:25px;background:#FDF9F6;"></div><div class="t" style="left:525px;top:449px;width:100px;height:25px;line-height:25px;color:#2b2b2b;font-size:12px;">半/一</div><div class="a" style="left:626px;top:448px;width:47px;height:25px;background:#FDF9F6;"></div><div class="t" style="left:626px;top:449px;width:47px;height:25px;line-height:25px;color:#2b2b2b;font-size:12px;">0.87</div><div class="a" style="left:674px;top:448px;width:64px;height:25px;background:#F0F8FB;"></div><div class="t" style="left:674px;top:449px;width:64px;height:25px;line-height:25px;color:#2b2b2b;font-size:12px;">1.69</div><div class="a" style="left:739px;top:448px;width:64px;height:25px;background:#F0F8FB;"></div><div class="t" style="left:739px;top:449px;width:64px;height:25px;line-height:25px;color:#2b2b2b;font-size:12px;">4.01</div><div class="a" style="left:804px;top:448px;width:81px;height:25px;background:#F0F8FB;"></div><div class="t" style="left:804px;top:449px;width:81px;height:25px;line-height:25px;color:#2b2b2b;font-size:12px;">4.07</div><div class="a" style="left:886px;top:448px;width:40px;height:25px;background:#FFFFFF;"></div><div class="t" style="left:886px;top:449px;width:40px;height:25px;line-height:25px;color:#2b2b2b;font-size:12px;"><span style="color:#CC0A0A">胜</span></div><div class="a" style="left:927px;top:448px;width:40px;height:25px;background:#FFFFFF;"></div><div class="t" style="left:927px;top:449px;width:40px;height:25px;line-height:25px;color:#2b2b2b;font-size:12px;"><span style="color:#CC0A0A">赢</span></div><div class="a" style="left:968px;top:448px;width:60px;height:25px;background:#FFFFFF;"></div><div class="t" style="left:968px;top:449px;width:60px;height:25px;line-height:25px;color:#2b2b2b;font-size:12px;"><span style="color:#CC0A0A">大</span></div><div class="a" style="left:82px;top:448px;width:1px;height:25px;background:#A9CFCF;"></div><div class="a" style="left:2px;top:474px;width:80px;height:25px;background:#00A9A9;"></div><div class="t" style="left:2px;top:475px;width:80px;height:25px;line-height:25px;color:#fff;font-size:12px;">球会友谊</div><div class="a" style="left:83px;top:474px;width:80px;height:25px;background:#EFEFEF;"></div><div class="t" style="left:83px;top:475px;width:80px;height:25px;line-height:25px;color:#2b2b2b;font-size:12px;">25-08-02</div><div class="a" style="left:164px;top:474px;width:98px;height:25px;background:#EFEFEF;"></div><div class="t" style="left:164px;top:475px;width:98px;height:25px;line-height:25px;color:#2b2b2b;font-size:12px;">拜仁慕尼黑</div><div class="a" style="left:263px;top:474px;width:95px;height:25px;background:#EFEFEF;"></div><div class="t" style="left:263px;top:475px;width:95px;height:25px;line-height:25px;color:#2b2b2b;font-size:12px;"><span style="color:#CC0A0A">2-1</span>(0-0)</div><div class="a" style="left:359px;top:474px;width:39px;height:25px;background:#EFEFEF;"></div><div class="t" style="left:359px;top:475px;width:39px;height:25px;line-height:25px;color:#2b2b2b;font-size:12px;">3-4</div><div class="a" style="left:399px;top:474px;width:78px;height:25px;background:#EFEFEF;"></div><div class="t" style="left:399px;top:475px;width:78px;height:25px;line-height:25px;color:#2b2b2b;font-size:12px;"><span style="color:#08661a">里昂</span></div><div class="a" style="left:478px;top:474px;width:46px;height:25px;background:#FDF9F6;"></div><div class="t" style="left:478px;top:475px;width:46px;height:25px;line-height:25px;color:#2b2b2b;font-size:12px;">0.76</div><div class="a" style="left:525px;top:474px;width:100px;height:25px;background:#FDF9F6;"></div><div class="t" style="left:525px;top:475px;width:100px;height:25px;line-height:25px;color:#2b2b2b;font-size:12px;">球半</div><div class="a" style="left:626px;top:474px;width:47px;height:25px;background:#FDF9F6;"></div><div class="t" style="left:626px;top:475px;width:47px;height:25px;line-height:25px;color:#2b2b2b;font-size:12px;">1.06</div><div class="a" style="left:674px;top:474px;width:64px;height:25px;background:#F0F8FB;"></div><div class="t" style="left:674px;top:475px;width:64px;height:25px;line-height:25px;color:#2b2b2b;font-size:12px;">1.45</div><div class="a" style="left:739px;top:474px;width:64px;height:25px;background:#F0F8FB;"></div><div class="t" style="left:739px;top:475px;width:64px;height:25px;line-height:25px;color:#2b2b2b;font-size:12px;">4.77</div><div class="a" style="left:804px;top:474px;width:81px;height:25px;background:#F0F8FB;"></div><div class="t" style="left:804px;top:475px;width:81px;height:25px;line-height:25px;color:#2b2b2b;font-size:12px;">5.40</div><div class="a" style="left:886px;top:474px;width:40px;height:25px;background:#EFEFEF;"></div><div class="t" style="left:886px;top:475px;width:40px;height:25px;line-height:25px;color:#2b2b2b;font-size:12px;"><span style="color:#1a1aa8">负</span></div><div class="a" style="left:927px;top:474px;width:40px;height:25px;background:#EFEFEF;"></div><div class="t" style="left:927px;top:475px;width:40px;height:25px;line-height:25px;color:#2b2b2b;font-size:12px;"><span style="color:#CC0A0A">赢</span></div><div class="a" style="left:968px;top:474px;width:60px;height:25px;background:#EFEFEF;"></div><div class="t" style="left:968px;top:475px;width:60px;height:25px;line-height:25px;color:#2b2b2b;font-size:12px;"><span style="color:#1a1aa8">小</span></div><div class="a" style="left:82px;top:474px;width:1px;height:25px;background:#A9CFCF;"></div><div class="a" style="left:2px;top:473px;width:80px;height:1px;background:#78D5D5;"></div><div class="a" style="left:2px;top:500px;width:80px;height:25px;background:#00A9A9;"></div><div class="t" style="left:2px;top:501px;width:80px;height:25px;line-height:25px;color:#fff;font-size:12px;">球会友谊</div><div class="a" style="left:83px;top:500px;width:80px;height:25px;background:#FFFFFF;"></div><div class="t" style="left:83px;top:501px;width:80px;height:25px;line-height:25px;color:#2b2b2b;font-size:12px;">25-07-30</div><div class="a" style="left:164px;top:500px;width:98px;height:25px;background:#FFFFFF;"></div><div class="t" style="left:164px;top:501px;width:98px;height:25px;line-height:25px;color:#2b2b2b;font-size:12px;">马洛卡(中)</div><div class="a" style="left:263px;top:500px;width:95px;height:25px;background:#FFFFFF;"></div><div class="t" style="left:263px;top:501px;width:95px;height:25px;line-height:25px;color:#2b2b2b;font-size:12px;"><span style="color:#CC0A0A">0-4</span>(0-4)</div><div class="a" style="left:359px;top:500px;width:39px;height:25px;background:#FFFFFF;"></div><div class="t" style="left:359px;top:501px;width:39px;height:25px;line-height:25px;color:#2b2b2b;font-size:12px;">5-2</div><div class="a" style="left:399px;top:500px;width:78px;height:25px;background:#FFFFFF;"></div><div class="t" style="left:399px;top:501px;width:78px;height:25px;line-height:25px;color:#2b2b2b;font-size:12px;"><span style="color:#08661a">里昂</span></div><div class="a" style="left:478px;top:500px;width:46px;height:25px;background:#FDF9F6;"></div><div class="t" style="left:478px;top:501px;width:46px;height:25px;line-height:25px;color:#2b2b2b;font-size:12px;">0.99</div><div class="a" style="left:525px;top:500px;width:100px;height:25px;background:#FDF9F6;"></div><div class="t" style="left:525px;top:501px;width:100px;height:25px;line-height:25px;color:#2b2b2b;font-size:12px;">受平/半</div><div class="a" style="left:626px;top:500px;width:47px;height:25px;background:#FDF9F6;"></div><div class="t" style="left:626px;top:501px;width:47px;height:25px;line-height:25px;color:#2b2b2b;font-size:12px;">0.83</div><div class="a" style="left:674px;top:500px;width:64px;height:25px;background:#F0F8FB;"></div><div class="t" style="left:674px;top:501px;width:64px;height:25px;line-height:25px;color:#2b2b2b;font-size:12px;">3.03</div><div class="a" style="left:739px;top:500px;width:64px;height:25px;background:#F0F8FB;"></div><div class="t" style="left:739px;top:501px;width:64px;height:25px;line-height:25px;color:#2b2b2b;font-size:12px;">3.79</div><div class="a" style="left:804px;top:500px;width:81px;height:25px;background:#F0F8FB;"></div><div class="t" style="left:804px;top:501px;width:81px;height:25px;line-height:25px;color:#2b2b2b;font-size:12px;">2.03</div><div class="a" style="left:886px;top:500px;width:40px;height:25px;background:#FFFFFF;"></div><div class="t" style="left:886px;top:501px;width:40px;height:25px;line-height:25px;color:#2b2b2b;font-size:12px;"><span style="color:#CC0A0A">胜</span></div><div class="a" style="left:927px;top:500px;width:40px;height:25px;background:#FFFFFF;"></div><div class="t" style="left:927px;top:501px;width:40px;height:25px;line-height:25px;color:#2b2b2b;font-size:12px;"><span style="color:#CC0A0A">赢</span></div><div class="a" style="left:968px;top:500px;width:60px;height:25px;background:#FFFFFF;"></div><div class="t" style="left:968px;top:501px;width:60px;height:25px;line-height:25px;color:#2b2b2b;font-size:12px;"><span style="color:#CC0A0A">大</span></div><div class="a" style="left:82px;top:500px;width:1px;height:25px;background:#A9CFCF;"></div><div class="a" style="left:2px;top:499px;width:80px;height:1px;background:#78D5D5;"></div><div class="a" style="left:2px;top:526px;width:80px;height:25px;background:#00A9A9;"></div><div class="t" style="left:2px;top:527px;width:80px;height:25px;line-height:25px;color:#fff;font-size:12px;">球会友谊</div><div class="a" style="left:83px;top:526px;width:80px;height:25px;background:#EFEFEF;"></div><div class="t" style="left:83px;top:527px;width:80px;height:25px;line-height:25px;color:#2b2b2b;font-size:12px;">25-07-26</div><div class="a" style="left:164px;top:526px;width:98px;height:25px;background:#EFEFEF;"></div><div class="t" style="left:164px;top:527px;width:98px;height:25px;line-height:25px;color:#2b2b2b;font-size:12px;">汉堡</div><div class="a" style="left:263px;top:526px;width:95px;height:25px;background:#EFEFEF;"></div><div class="t" style="left:263px;top:527px;width:95px;height:25px;line-height:25px;color:#2b2b2b;font-size:12px;"><span style="color:#CC0A0A">0-4</span>(0-3)</div><div class="a" style="left:359px;top:526px;width:39px;height:25px;background:#EFEFEF;"></div><div class="t" style="left:359px;top:527px;width:39px;height:25px;line-height:25px;color:#2b2b2b;font-size:12px;">1-0</div><div class="a" style="left:399px;top:526px;width:78px;height:25px;background:#EFEFEF;"></div><div class="t" style="left:399px;top:527px;width:78px;height:25px;line-height:25px;color:#2b2b2b;font-size:12px;"><span style="color:#08661a">里昂</span></div><div class="a" style="left:478px;top:526px;width:46px;height:25px;background:#FDF9F6;"></div><div class="t" style="left:478px;top:527px;width:46px;height:25px;line-height:25px;color:#2b2b2b;font-size:12px;">0.70</div><div class="a" style="left:525px;top:526px;width:100px;height:25px;background:#FDF9F6;"></div><div class="t" style="left:525px;top:527px;width:100px;height:25px;line-height:25px;color:#2b2b2b;font-size:12px;">平手</div><div class="a" style="left:626px;top:526px;width:47px;height:25px;background:#FDF9F6;"></div><div class="t" style="left:626px;top:527px;width:47px;height:25px;line-height:25px;color:#2b2b2b;font-size:12px;">1.06</div><div class="a" style="left:674px;top:526px;width:64px;height:25px;background:#F0F8FB;"></div><div class="t" style="left:674px;top:527px;width:64px;height:25px;line-height:25px;color:#2b2b2b;font-size:12px;">2.24</div><div class="a" style="left:739px;top:526px;width:64px;height:25px;background:#F0F8FB;"></div><div class="t" style="left:739px;top:527px;width:64px;height:25px;line-height:25px;color:#2b2b2b;font-size:12px;">3.87</div><div class="a" style="left:804px;top:526px;width:81px;height:25px;background:#F0F8FB;"></div><div class="t" style="left:804px;top:527px;width:81px;height:25px;line-height:25px;color:#2b2b2b;font-size:12px;">2.62</div><div class="a" style="left:886px;top:526px;width:40px;height:25px;background:#EFEFEF;"></div><div class="t" style="left:886px;top:527px;width:40px;height:25px;line-height:25px;color:#2b2b2b;font-size:12px;"><span style="color:#CC0A0A">胜</span></div><div class="a" style="left:927px;top:526px;width:40px;height:25px;background:#EFEFEF;"></div><div class="t" style="left:927px;top:527px;width:40px;height:25px;line-height:25px;color:#2b2b2b;font-size:12px;"><span style="color:#CC0A0A">赢</span></div><div class="a" style="left:968px;top:526px;width:60px;height:25px;background:#EFEFEF;"></div><div class="t" style="left:968px;top:527px;width:60px;height:25px;line-height:25px;color:#2b2b2b;font-size:12px;"><span style="color:#CC0A0A">大</span></div><div class="a" style="left:82px;top:526px;width:1px;height:25px;background:#A9CFCF;"></div><div class="a" style="left:2px;top:525px;width:80px;height:1px;background:#78D5D5;"></div><div class="a" style="left:2px;top:552px;width:80px;height:25px;background:#00A9A9;"></div><div class="t" style="left:2px;top:553px;width:80px;height:25px;line-height:25px;color:#fff;font-size:12px;">球会友谊</div><div class="a" style="left:83px;top:552px;width:80px;height:25px;background:#FFFFFF;"></div><div class="t" style="left:83px;top:553px;width:80px;height:25px;line-height:25px;color:#2b2b2b;font-size:12px;">25-07-23</div><div class="a" style="left:164px;top:552px;width:98px;height:25px;background:#FFFFFF;"></div><div class="t" style="left:164px;top:553px;width:98px;height:25px;line-height:25px;color:#2b2b2b;font-size:12px;"><span style="color:#08661a">里昂(中)</span></div><div class="a" style="left:263px;top:552px;width:95px;height:25px;background:#FFFFFF;"></div><div class="t" style="left:263px;top:553px;width:95px;height:25px;line-height:25px;color:#2b2b2b;font-size:12px;"><span style="color:#CC0A0A">0-0</span>(0-0)</div><div class="a" style="left:359px;top:552px;width:39px;height:25px;background:#FFFFFF;"></div><div class="t" style="left:359px;top:553px;width:39px;height:25px;line-height:25px;color:#2b2b2b;font-size:12px;">0-0</div><div class="a" style="left:399px;top:552px;width:78px;height:25px;background:#FFFFFF;"></div><div class="t" style="left:399px;top:553px;width:78px;height:25px;line-height:25px;color:#2b2b2b;font-size:12px;">莫伦贝克</div><div class="a" style="left:478px;top:552px;width:46px;height:25px;background:#FDF9F6;"></div><div class="t" style="left:478px;top:553px;width:46px;height:25px;line-height:25px;color:#2b2b2b;font-size:12px;">0.94</div><div class="a" style="left:525px;top:552px;width:100px;height:25px;background:#FDF9F6;"></div><div class="t" style="left:525px;top:553px;width:100px;height:25px;line-height:25px;color:#2b2b2b;font-size:12px;">一/球半</div><div class="a" style="left:626px;top:552px;width:47px;height:25px;background:#FDF9F6;"></div><div class="t" style="left:626px;top:553px;width:47px;height:25px;line-height:25px;color:#2b2b2b;font-size:12px;">0.88</div><div class="a" style="left:674px;top:552px;width:64px;height:25px;background:#F0F8FB;"></div><div class="t" style="left:674px;top:553px;width:64px;height:25px;line-height:25px;color:#2b2b2b;font-size:12px;">1.40</div><div class="a" style="left:739px;top:552px;width:64px;height:25px;background:#F0F8FB;"></div><div class="t" style="left:739px;top:553px;width:64px;height:25px;line-height:25px;color:#2b2b2b;font-size:12px;">4.43</div><div class="a" style="left:804px;top:552px;width:81px;height:25px;background:#F0F8FB;"></div><div class="t" style="left:804px;top:553px;width:81px;height:25px;line-height:25px;color:#2b2b2b;font-size:12px;">6.12</div><div class="a" style="left:886px;top:552px;width:40px;height:25px;background:#FFFFFF;"></div><div class="t" style="left:886px;top:553px;width:40px;height:25px;line-height:25px;color:#2b2b2b;font-size:12px;"><span style="color:#08661a">平</span></div><div class="a" style="left:927px;top:552px;width:40px;height:25px;background:#FFFFFF;"></div><div class="t" style="left:927px;top:553px;width:40px;height:25px;line-height:25px;color:#2b2b2b;font-size:12px;"><span style="color:#1a1aa8">输</span></div><div class="a" style="left:968px;top:552px;width:60px;height:25px;background:#FFFFFF;"></div><div class="t" style="left:968px;top:553px;width:60px;height:25px;line-height:25px;color:#2b2b2b;font-size:12px;"><span style="color:#1a1aa8">小</span></div><div class="a" style="left:82px;top:552px;width:1px;height:25px;background:#A9CFCF;"></div><div class="a" style="left:2px;top:551px;width:80px;height:1px;background:#78D5D5;"></div><div class="a" style="left:2px;top:578px;width:80px;height:25px;background:#00A9A9;"></div><div class="t" style="left:2px;top:579px;width:80px;height:25px;line-height:25px;color:#fff;font-size:12px;">球会友谊</div><div class="a" style="left:83px;top:578px;width:80px;height:25px;background:#EFEFEF;"></div><div class="t" style="left:83px;top:579px;width:80px;height:25px;line-height:25px;color:#2b2b2b;font-size:12px;">25-07-19</div><div class="a" style="left:164px;top:578px;width:98px;height:25px;background:#EFEFEF;"></div><div class="t" style="left:164px;top:579px;width:98px;height:25px;line-height:25px;color:#2b2b2b;font-size:12px;"><span style="color:#08661a">里昂</span></div><div class="a" style="left:263px;top:578px;width:95px;height:25px;background:#EFEFEF;"></div><div class="t" style="left:263px;top:579px;width:95px;height:25px;line-height:25px;color:#2b2b2b;font-size:12px;"><span style="color:#CC0A0A">1-0</span>(0-0)</div><div class="a" style="left:359px;top:578px;width:39px;height:25px;background:#EFEFEF;"></div><div class="t" style="left:359px;top:579px;width:39px;height:25px;line-height:25px;color:#2b2b2b;font-size:12px;">0-0</div><div class="a" style="left:399px;top:578px;width:78px;height:25px;background:#EFEFEF;"></div><div class="t" style="left:399px;top:579px;width:78px;height:25px;line-height:25px;color:#2b2b2b;font-size:12px;">维利法兰</div><div class="a" style="left:478px;top:578px;width:46px;height:25px;background:#FDF9F6;"></div><div class="a" style="left:525px;top:578px;width:100px;height:25px;background:#FDF9F6;"></div><div class="a" style="left:626px;top:578px;width:47px;height:25px;background:#FDF9F6;"></div><div class="a" style="left:674px;top:578px;width:64px;height:25px;background:#F0F8FB;"></div><div class="t" style="left:674px;top:579px;width:64px;height:25px;line-height:25px;color:#2b2b2b;font-size:12px;">1.13</div><div class="a" style="left:739px;top:578px;width:64px;height:25px;background:#F0F8FB;"></div><div class="t" style="left:739px;top:579px;width:64px;height:25px;line-height:25px;color:#2b2b2b;font-size:12px;">6.96</div><div class="a" style="left:804px;top:578px;width:81px;height:25px;background:#F0F8FB;"></div><div class="t" style="left:804px;top:579px;width:81px;height:25px;line-height:25px;color:#2b2b2b;font-size:12px;">14.97</div><div class="a" style="left:886px;top:578px;width:40px;height:25px;background:#EFEFEF;"></div><div class="t" style="left:886px;top:579px;width:40px;height:25px;line-height:25px;color:#2b2b2b;font-size:12px;"><span style="color:#CC0A0A">胜</span></div><div class="a" style="left:927px;top:578px;width:40px;height:25px;background:#EFEFEF;"></div><div class="a" style="left:968px;top:578px;width:60px;height:25px;background:#EFEFEF;"></div><div class="a" style="left:82px;top:578px;width:1px;height:25px;background:#A9CFCF;"></div><div class="a" style="left:2px;top:577px;width:80px;height:1px;background:#78D5D5;"></div><div class="a" style="left:2px;top:604px;width:80px;height:25px;background:#663333;"></div><div class="t" style="left:2px;top:605px;width:80px;height:25px;line-height:25px;color:#fff;font-size:12px;">法甲</div><div class="a" style="left:83px;top:604px;width:80px;height:25px;background:#FFFFFF;"></div><div class="t" style="left:83px;top:605px;width:80px;height:25px;line-height:25px;color:#2b2b2b;font-size:12px;">25-05-18</div><div class="a" style="left:164px;top:604px;width:98px;height:25px;background:#FFFFFF;"></div><div class="t" style="left:164px;top:605px;width:98px;height:25px;line-height:25px;color:#2b2b2b;font-size:12px;"><span style="color:#08661a">里昂</span></div><div class="a" style="left:263px;top:604px;width:95px;height:25px;background:#FFFFFF;"></div><div class="t" style="left:263px;top:605px;width:95px;height:25px;line-height:25px;color:#2b2b2b;font-size:12px;"><span style="color:#CC0A0A">2-0</span>(0-0)</div><div class="a" style="left:359px;top:604px;width:39px;height:25px;background:#FFFFFF;"></div><div class="t" style="left:359px;top:605px;width:39px;height:25px;line-height:25px;color:#2b2b2b;font-size:12px;">8-8</div><div class="a" style="left:399px;top:604px;width:78px;height:25px;background:#FFFFFF;"></div><div class="t" style="left:399px;top:605px;width:78px;height:25px;line-height:25px;color:#2b2b2b;font-size:12px;">昂热</div><div class="a" style="left:478px;top:604px;width:46px;height:25px;background:#FDF9F6;"></div><div class="t" style="left:478px;top:605px;width:46px;height:25px;line-height:25px;color:#2b2b2b;font-size:12px;">0.97</div><div class="a" style="left:525px;top:604px;width:100px;height:25px;background:#FDF9F6;"></div><div class="t" style="left:525px;top:605px;width:100px;height:25px;line-height:25px;color:#2b2b2b;font-size:12px;">两/两球半</div><div class="a" style="left:626px;top:604px;width:47px;height:25px;background:#FDF9F6;"></div><div class="t" style="left:626px;top:605px;width:47px;height:25px;line-height:25px;color:#2b2b2b;font-size:12px;">0.92</div><div class="a" style="left:674px;top:604px;width:64px;height:25px;background:#F0F8FB;"></div><div class="t" style="left:674px;top:605px;width:64px;height:25px;line-height:25px;color:#2b2b2b;font-size:12px;">1.18</div><div class="a" style="left:739px;top:604px;width:64px;height:25px;background:#F0F8FB;"></div><div class="t" style="left:739px;top:605px;width:64px;height:25px;line-height:25px;color:#2b2b2b;font-size:12px;">7.83</div><div class="a" style="left:804px;top:604px;width:81px;height:25px;background:#F0F8FB;"></div><div class="t" style="left:804px;top:605px;width:81px;height:25px;line-height:25px;color:#2b2b2b;font-size:12px;">13.80</div><div class="a" style="left:886px;top:604px;width:40px;height:25px;background:#FFFFFF;"></div><div class="t" style="left:886px;top:605px;width:40px;height:25px;line-height:25px;color:#2b2b2b;font-size:12px;"><span style="color:#CC0A0A">胜</span></div><div class="a" style="left:927px;top:604px;width:40px;height:25px;background:#FFFFFF;"></div><div class="t" style="left:927px;top:605px;width:40px;height:25px;line-height:25px;color:#2b2b2b;font-size:12px;"><span style="color:#1a1aa8">输</span></div><div class="a" style="left:968px;top:604px;width:60px;height:25px;background:#FFFFFF;"></div><div class="t" style="left:968px;top:605px;width:60px;height:25px;line-height:25px;color:#2b2b2b;font-size:12px;"><span style="color:#1a1aa8">小</span></div><div class="a" style="left:82px;top:604px;width:1px;height:25px;background:#C4AEAE;"></div><div class="a" style="left:2px;top:603px;width:80px;height:1px;background:#B9C6C6;"></div><div class="a" style="left:2px;top:630px;width:80px;height:25px;background:#663333;"></div><div class="t" style="left:2px;top:631px;width:80px;height:25px;line-height:25px;color:#fff;font-size:12px;">法甲</div><div class="a" style="left:83px;top:630px;width:80px;height:25px;background:#EFEFEF;"></div><div class="t" style="left:83px;top:631px;width:80px;height:25px;line-height:25px;color:#2b2b2b;font-size:12px;">25-05-11</div><div class="a" style="left:164px;top:630px;width:98px;height:25px;background:#EFEFEF;"></div><div class="t" style="left:164px;top:631px;width:98px;height:25px;line-height:25px;color:#2b2b2b;font-size:12px;">摩纳哥</div><div class="a" style="left:263px;top:630px;width:95px;height:25px;background:#EFEFEF;"></div><div class="t" style="left:263px;top:631px;width:95px;height:25px;line-height:25px;color:#2b2b2b;font-size:12px;"><span style="color:#CC0A0A">2-0</span>(0-0)</div><div class="a" style="left:359px;top:630px;width:39px;height:25px;background:#EFEFEF;"></div><div class="t" style="left:359px;top:631px;width:39px;height:25px;line-height:25px;color:#2b2b2b;font-size:12px;">3-5</div><div class="a" style="left:399px;top:630px;width:78px;height:25px;background:#EFEFEF;"></div><div class="t" style="left:399px;top:631px;width:78px;height:25px;line-height:25px;color:#2b2b2b;font-size:12px;"><span style="color:#08661a">里昂</span></div><div class="a" style="left:478px;top:630px;width:46px;height:25px;background:#FDF9F6;"></div><div class="t" style="left:478px;top:631px;width:46px;height:25px;line-height:25px;color:#2b2b2b;font-size:12px;">1.09</div><div class="a" style="left:525px;top:630px;width:100px;height:25px;background:#FDF9F6;"></div><div class="t" style="left:525px;top:631px;width:100px;height:25px;line-height:25px;color:#2b2b2b;font-size:12px;">半/一</div><div class="a" style="left:626px;top:630px;width:47px;height:25px;background:#FDF9F6;"></div><div class="t" style="left:626px;top:631px;width:47px;height:25px;line-height:25px;color:#2b2b2b;font-size:12px;">0.80</div><div class="a" style="left:674px;top:630px;width:64px;height:25px;background:#F0F8FB;"></div><div class="t" style="left:674px;top:631px;width:64px;height:25px;line-height:25px;color:#2b2b2b;font-size:12px;">1.81</div><div class="a" style="left:739px;top:630px;width:64px;height:25px;background:#F0F8FB;"></div><div class="t" style="left:739px;top:631px;width:64px;height:25px;line-height:25px;color:#2b2b2b;font-size:12px;">4.27</div><div class="a" style="left:804px;top:630px;width:81px;height:25px;background:#F0F8FB;"></div><div class="t" style="left:804px;top:631px;width:81px;height:25px;line-height:25px;color:#2b2b2b;font-size:12px;">3.74</div><div class="a" style="left:886px;top:630px;width:40px;height:25px;background:#EFEFEF;"></div><div class="t" style="left:886px;top:631px;width:40px;height:25px;line-height:25px;color:#2b2b2b;font-size:12px;"><span style="color:#1a1aa8">负</span></div><div class="a" style="left:927px;top:630px;width:40px;height:25px;background:#EFEFEF;"></div><div class="t" style="left:927px;top:631px;width:40px;height:25px;line-height:25px;color:#2b2b2b;font-size:12px;"><span style="color:#1a1aa8">输</span></div><div class="a" style="left:968px;top:630px;width:60px;height:25px;background:#EFEFEF;"></div><div class="t" style="left:968px;top:631px;width:60px;height:25px;line-height:25px;color:#2b2b2b;font-size:12px;"><span style="color:#1a1aa8">小</span></div><div class="a" style="left:82px;top:630px;width:1px;height:25px;background:#C4AEAE;"></div><div class="a" style="left:2px;top:629px;width:80px;height:1px;background:#C9A9A9;"></div><div class="a" style="left:2px;top:656px;width:80px;height:25px;background:#663333;"></div><div class="t" style="left:2px;top:657px;width:80px;height:25px;line-height:25px;color:#fff;font-size:12px;">法甲</div><div class="a" style="left:83px;top:656px;width:80px;height:25px;background:#FFFFFF;"></div><div class="t" style="left:83px;top:657px;width:80px;height:25px;line-height:25px;color:#2b2b2b;font-size:12px;">25-05-04</div><div class="a" style="left:164px;top:656px;width:98px;height:25px;background:#FFFFFF;"></div><div class="t" style="left:164px;top:657px;width:98px;height:25px;line-height:25px;color:#2b2b2b;font-size:12px;"><span style="color:#08661a">里昂</span></div><div class="a" style="left:263px;top:656px;width:95px;height:25px;background:#FFFFFF;"></div><div class="t" style="left:263px;top:657px;width:95px;height:25px;line-height:25px;color:#2b2b2b;font-size:12px;"><span style="color:#CC0A0A">1-2</span>(0-1)</div><div class="a" style="left:359px;top:656px;width:39px;height:25px;background:#FFFFFF;"></div><div class="t" style="left:359px;top:657px;width:39px;height:25px;line-height:25px;color:#2b2b2b;font-size:12px;">8-2</div><div class="a" style="left:399px;top:656px;width:78px;height:25px;background:#FFFFFF;"></div><div class="t" style="left:399px;top:657px;width:78px;height:25px;line-height:25px;color:#2b2b2b;font-size:12px;">朗斯</div><div class="a" style="left:478px;top:656px;width:46px;height:25px;background:#FDF9F6;"></div><div class="t" style="left:478px;top:657px;width:46px;height:25px;line-height:25px;color:#2b2b2b;font-size:12px;">0.89</div><div class="a" style="left:525px;top:656px;width:100px;height:25px;background:#FDF9F6;"></div><div class="t" style="left:525px;top:657px;width:100px;height:25px;line-height:25px;color:#2b2b2b;font-size:12px;">一/球半</div><div class="a" style="left:626px;top:656px;width:47px;height:25px;background:#FDF9F6;"></div><div class="t" style="left:626px;top:657px;width:47px;height:25px;line-height:25px;color:#2b2b2b;font-size:12px;">1.00</div><div class="a" style="left:674px;top:656px;width:64px;height:25px;background:#F0F8FB;"></div><div class="t" style="left:674px;top:657px;width:64px;height:25px;line-height:25px;color:#2b2b2b;font-size:12px;">1.45</div><div class="a" style="left:739px;top:656px;width:64px;height:25px;background:#F0F8FB;"></div><div class="t" style="left:739px;top:657px;width:64px;height:25px;line-height:25px;color:#2b2b2b;font-size:12px;">5.05</div><div class="a" style="left:804px;top:656px;width:81px;height:25px;background:#F0F8FB;"></div><div class="t" style="left:804px;top:657px;width:81px;height:25px;line-height:25px;color:#2b2b2b;font-size:12px;">6.15</div><div class="a" style="left:886px;top:656px;width:40px;height:25px;background:#FFFFFF;"></div><div class="t" style="left:886px;top:657px;width:40px;height:25px;line-height:25px;color:#2b2b2b;font-size:12px;"><span style="color:#1a1aa8">负</span></div><div class="a" style="left:927px;top:656px;width:40px;height:25px;background:#FFFFFF;"></div><div class="t" style="left:927px;top:657px;width:40px;height:25px;line-height:25px;color:#2b2b2b;font-size:12px;"><span style="color:#1a1aa8">输</span></div><div class="a" style="left:968px;top:656px;width:60px;height:25px;background:#FFFFFF;"></div><div class="t" style="left:968px;top:657px;width:60px;height:25px;line-height:25px;color:#2b2b2b;font-size:12px;"><span style="color:#1a1aa8">小</span></div><div class="a" style="left:82px;top:656px;width:1px;height:25px;background:#C4AEAE;"></div><div class="a" style="left:2px;top:655px;width:80px;height:1px;background:#C9A9A9;"></div><div class="a" style="left:2px;top:682px;width:80px;height:25px;background:#663333;"></div><div class="t" style="left:2px;top:683px;width:80px;height:25px;line-height:25px;color:#fff;font-size:12px;">法甲</div><div class="a" style="left:83px;top:682px;width:80px;height:25px;background:#EFEFEF;"></div><div class="t" style="left:83px;top:683px;width:80px;height:25px;line-height:25px;color:#2b2b2b;font-size:12px;">25-04-27</div><div class="a" style="left:164px;top:682px;width:98px;height:25px;background:#EFEFEF;"></div><div class="t" style="left:164px;top:683px;width:98px;height:25px;line-height:25px;color:#2b2b2b;font-size:12px;"><span style="color:#08661a">里昂</span></div><div class="a" style="left:263px;top:682px;width:95px;height:25px;background:#EFEFEF;"></div><div class="t" style="left:263px;top:683px;width:95px;height:25px;line-height:25px;color:#2b2b2b;font-size:12px;"><span style="color:#CC0A0A">4-1</span>(3-0)</div><div class="a" style="left:359px;top:682px;width:39px;height:25px;background:#EFEFEF;"></div><div class="t" style="left:359px;top:683px;width:39px;height:25px;line-height:25px;color:#2b2b2b;font-size:12px;">7-2</div><div class="a" style="left:399px;top:682px;width:78px;height:25px;background:#EFEFEF;"></div><div class="t" style="left:399px;top:683px;width:78px;height:25px;line-height:25px;color:#2b2b2b;font-size:12px;">雷恩</div><div class="a" style="left:478px;top:682px;width:46px;height:25px;background:#FDF9F6;"></div><div class="t" style="left:478px;top:683px;width:46px;height:25px;line-height:25px;color:#2b2b2b;font-size:12px;">1.04</div><div class="a" style="left:525px;top:682px;width:100px;height:25px;background:#FDF9F6;"></div><div class="t" style="left:525px;top:683px;width:100px;height:25px;line-height:25px;color:#2b2b2b;font-size:12px;">一球</div><div class="a" style="left:626px;top:682px;width:47px;height:25px;background:#FDF9F6;"></div><div class="t" style="left:626px;top:683px;width:47px;height:25px;line-height:25px;color:#2b2b2b;font-size:12px;">0.85</div><div class="a" style="left:674px;top:682px;width:64px;height:25px;background:#F0F8FB;"></div><div class="t" style="left:674px;top:683px;width:64px;height:25px;line-height:25px;color:#2b2b2b;font-size:12px;">1.67</div><div class="a" style="left:739px;top:682px;width:64px;height:25px;background:#F0F8FB;"></div><div class="t" style="left:739px;top:683px;width:64px;height:25px;line-height:25px;color:#2b2b2b;font-size:12px;">4.28</div><div class="a" style="left:804px;top:682px;width:81px;height:25px;background:#F0F8FB;"></div><div class="t" style="left:804px;top:683px;width:81px;height:25px;line-height:25px;color:#2b2b2b;font-size:12px;">4.54</div><div class="a" style="left:886px;top:682px;width:40px;height:25px;background:#EFEFEF;"></div><div class="t" style="left:886px;top:683px;width:40px;height:25px;line-height:25px;color:#2b2b2b;font-size:12px;"><span style="color:#CC0A0A">胜</span></div><div class="a" style="left:927px;top:682px;width:40px;height:25px;background:#EFEFEF;"></div><div class="t" style="left:927px;top:683px;width:40px;height:25px;line-height:25px;color:#2b2b2b;font-size:12px;"><span style="color:#CC0A0A">赢</span></div><div class="a" style="left:968px;top:682px;width:60px;height:25px;background:#EFEFEF;"></div><div class="t" style="left:968px;top:683px;width:60px;height:25px;line-height:25px;color:#2b2b2b;font-size:12px;"><span style="color:#CC0A0A">大</span></div><div class="a" style="left:82px;top:682px;width:1px;height:25px;background:#C4AEAE;"></div><div class="a" style="left:2px;top:681px;width:80px;height:1px;background:#C9A9A9;"></div><div class="a" style="left:2px;top:447px;width:80px;height:1px;background:#8fd6d6;"></div><div class="a" style="left:2px;top:708px;width:1026px;height:25px;background:#FFFFFF;"></div><div class="a" style="left:1px;top:708px;width:1px;height:25px;background:#BDBDBD;"></div><div class="a" style="left:1028px;top:708px;width:1px;height:25px;background:#BDBDBD;"></div><div class="a" style="left:1px;top:733px;width:1028px;height:1px;background:#BDBDBD;"></div><div class="t" style="left:1px;top:709px;width:1028px;height:25px;line-height:25px;color:#2b2b2b;font-size:12px;letter-spacing:0.25px;">近<span style="color:#CC0A0A">10</span>场,胜6平1负3, 胜率:<span style="color:#CC0A0A">60%</span> 让胜率:<span style="color:#CC0A0A">55.6%</span> 大率:<span style="color:#CC0A0A">44.4%</span> 单率:<span style="color:#CC0A0A">50%</span></div></body></html>
